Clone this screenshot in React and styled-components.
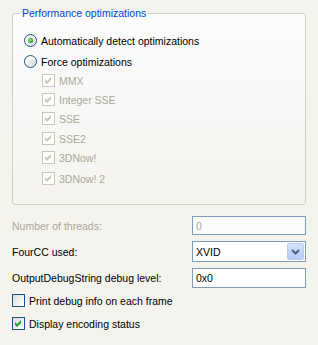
import React from "react"
import styled, { createGlobalStyle, css } from "styled-components"

const Global = createGlobalStyle`
  html, body {
    margin: 0;
    background: #f4f3ee;
  }
  body {
    font-family: "Liberation Sans", Arial, sans-serif;
    font-size: 10.5px;
    color: #000;
  }
`

const Page = styled.div`
  width: 318px;
  height: 345px;
  box-sizing: border-box;
  padding: 7px 12px 0 12px;
  background: #f4f3ee;
`

const Group = styled.fieldset`
  margin: 0;
  width: 294px;
  box-sizing: border-box;
  height: 198px;
  padding: 11px 0 0 11px;
  border: 1px solid #d0d0bf;
  border-radius: 3px;
  background: linear-gradient(#fcfcfe, #f4f3ee);
`

const Legend = styled.legend`
  margin-left: -4px;
  padding: 0 2px;
  color: #0046d5;
  font-size: 10.5px;
  line-height: 13px;
`

const Row = styled.label`
  display: flex;
  align-items: center;
  gap: 4px;
  height: 19px;
  margin-top: ${p => p.$mt || 0}px;
  padding-left: ${p => (p.$indent ? 18 : 0)}px;
  color: ${p => (p.$disabled ? "#aca899" : "#000")};
  white-space: nowrap;
`

const RadioDot = styled.span`
  position: relative;
  width: 13px;
  height: 13px;
  box-sizing: border-box;
  border-radius: 50%;
  border: 1px solid #1c5180;
  background: radial-gradient(circle at 70% 70%, #dcdcd7, #fff 70%);
  ${p => p.$on && css`
    &::after {
      content: "";
      position: absolute;
      left: 3px;
      top: 3px;
      width: 5px;
      height: 5px;
      border-radius: 50%;
      background: radial-gradient(circle at 40% 40%, #8ae28a, #21a121 70%);
    }
  `}
`

const Box = styled.span`
  display: flex;
  align-items: center;
  justify-content: center;
  width: 13px;
  height: 13px;
  box-sizing: border-box;
  border: 1px solid ${p => (p.$disabled ? "#cac8bb" : "#1c5180")};
  background: ${p => (p.$disabled ? "#fff" : "linear-gradient(135deg, #dcdcd7, #fff)")};
  flex: none;
`

const Check = ({ color }) => (
  <svg width="7" height="7" viewBox="0 0 7 7">
    <path d="M0 2 L2 4 L6 0 L6 3 L2 7 L0 5 Z" fill={color} />
  </svg>
)

const Radio = ({ on, children, mt }) => (
  <Row $mt={mt}>
    <RadioDot $on={on} />
    {children}
  </Row>
)

const CheckBox = ({ on, disabled, indent, children, mt }) => (
  <Row $mt={mt} $indent={indent} $disabled={disabled}>
    <Box $disabled={disabled}>{on && <Check color={disabled ? "#cac8bb" : "#21a121"} />}</Box>
    {children}
  </Row>
)

const Form = styled.div`
  display: grid;
  grid-template-columns: 180px 114px;
  align-items: center;
  margin-top: 11px;
  row-gap: 6px;
`

const Label = styled.span`
  color: ${p => (p.$disabled ? "#aca899" : "#000")};
`

const Field = styled.div`
  height: ${p => p.$h || 19}px;
  box-sizing: border-box;
  border: 1px solid #7f9db9;
  background: #fff;
  display: flex;
  align-items: center;
  padding-left: 3px;
  color: ${p => (p.$disabled ? "#aca899" : "#000")};
  ${p => p.$disabled && css`background: #fbfbf9;`}
`

const Select = styled(Field)`
  height: 21px;
  padding: 1px 1px 1px 3px;
  justify-content: space-between;
`

const DropBtn = styled.span`
  width: 17px;
  height: 17px;
  border-radius: 2px;
  background: linear-gradient(#d5e2fc, #b5c9f7);
  border: 1px solid #b8cbf5;
  box-sizing: border-box;
  display: flex;
  align-items: center;
  justify-content: center;
`

const Checks = styled.div`
  margin-top: 3px;
  display: flex;
  flex-direction: column;
  gap: 4px;
`

export default function App() {
  return (
    <Page>
      <Global />
      <Group>
        <Legend>Performance optimizations</Legend>
        <Radio on>Automatically detect optimizations</Radio>
        <Radio mt={2}>Force optimizations</Radio>
        <CheckBox on disabled indent>MMX</CheckBox>
        <CheckBox on disabled indent>Integer SSE</CheckBox>
        <CheckBox on disabled indent>SSE</CheckBox>
        <CheckBox on disabled indent mt={1}>SSE2</CheckBox>
        <CheckBox on disabled indent>3DNow!</CheckBox>
        <CheckBox on disabled indent mt={2}>3DNow! 2</CheckBox>
      </Group>
      <Form>
        <Label $disabled>Number of threads:</Label>
        <Field $disabled>0</Field>
        <Label>FourCC used:</Label>
        <Select>
          XVID
          <DropBtn>
            <svg width="9" height="6" viewBox="0 0 9 6">
              <path d="M1 1 L4.5 4.5 L8 1" stroke="#4d6185" strokeWidth="2" fill="none" />
            </svg>
          </DropBtn>
        </Select>
        <Label>OutputDebugString debug level:</Label>
        <Field $h={20}>0x0</Field>
      </Form>
      <Checks>
        <CheckBox>Print debug info on each frame</CheckBox>
        <CheckBox on>Display encoding status</CheckBox>
      </Checks>
    </Page>
  )
}
